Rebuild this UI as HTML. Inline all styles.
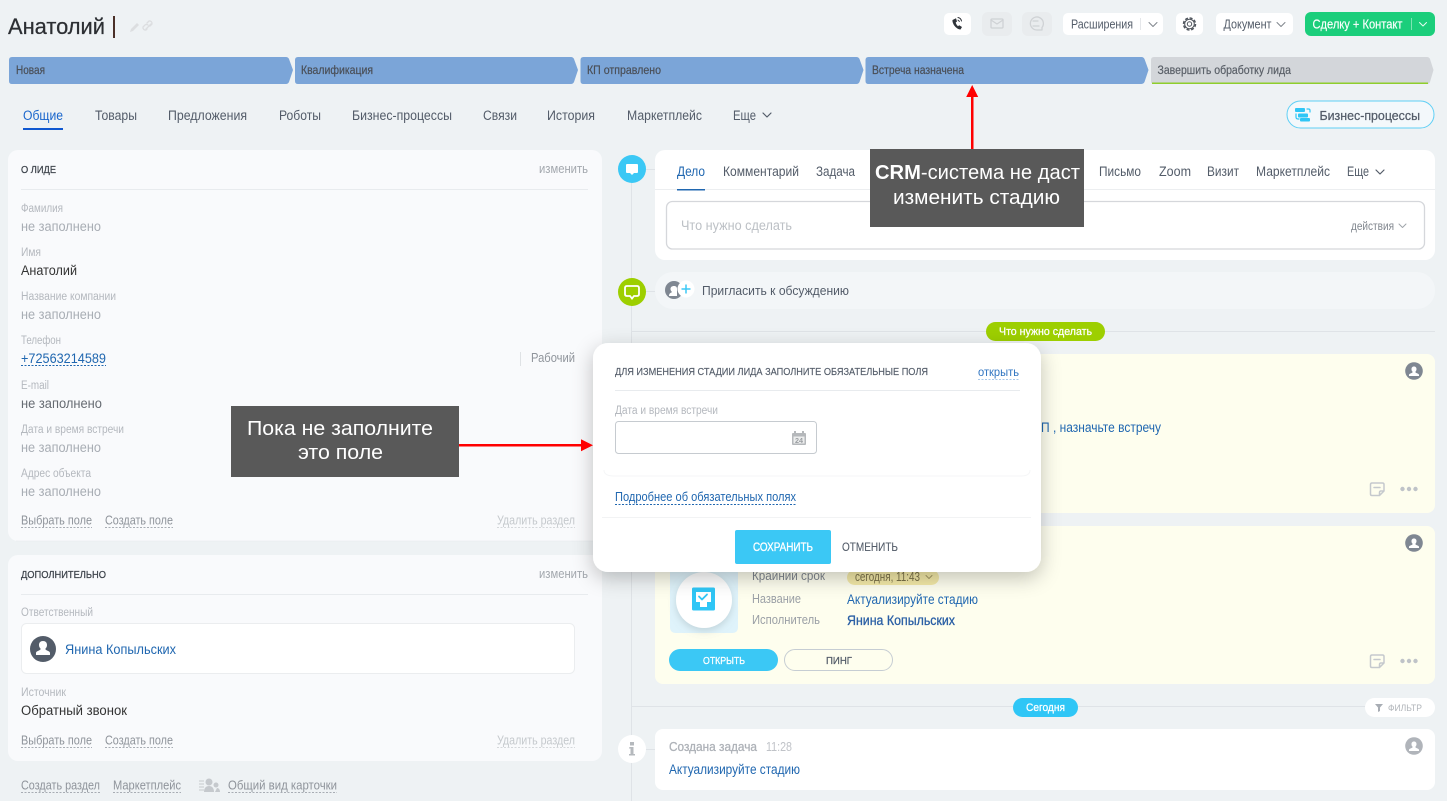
<!DOCTYPE html>
<html lang="ru"><head><meta charset="utf-8"><title>Анатолий</title>
<style>
html,body{margin:0;padding:0;width:1447px;height:801px;overflow:hidden;background:#eef2f4}
svg{display:block;position:absolute;left:0;top:0}
text{font-family:"Liberation Sans","DejaVu Sans",sans-serif;font-size:13.5px;fill:#535c69;white-space:pre}
.l{font-size:11.5px;fill:#b4b8be}
.e{fill:#a8adb4}
.v{fill:#333}
.b{fill:#2067b0}
.g{font-size:12.5px;fill:#8f949b}
.s{font-size:11.5px;fill:#4a4f57;stroke:#4a4f57;stroke-width:.2}
.h{font-size:10.5px;fill:#3d434b;stroke:#3d434b;stroke-width:.25}
.t{font-size:13.5px;fill:#535c69}
.w{fill:#fff;stroke:#fff;stroke-width:.25;font-size:11px}
.a{fill:#fff;font-size:20px}
.c{fill:none;stroke-linecap:round;stroke-linejoin:round}
</style></head><body>
<svg width="1447" height="801" viewBox="0 0 1447 801" xmlns="http://www.w3.org/2000/svg">
<defs>
<filter id="sh" x="-15%" y="-20%" width="130%" height="145%"><feDropShadow dx="0" dy="6" stdDeviation="10" flood-color="#000" flood-opacity=".24"/></filter>
<filter id="cs" x="-30%" y="-30%" width="160%" height="160%"><feDropShadow dx="0" dy="3" stdDeviation="4" flood-color="#7a8a90" flood-opacity=".3"/></filter>
</defs>
<rect width="1447" height="801" fill="#eef2f4"/>

<!-- header -->
<text x="8" y="34" style="font-size:22.5px;fill:#2c2f33;stroke:#2c2f33;stroke-width:.25" textLength="97" lengthAdjust="spacingAndGlyphs">Анатолий</text>
<rect x="113" y="16" width="2" height="22" fill="#4a3028"/>
<path d="M130 32l1-3 6-6 2 2-6 6z" fill="#dcdee0"/>
<path d="M147 29l-1 1a2.500 2.500 0 0 1-3-3l2-2a2.500 2.500 0 0 1 3 0M150 26l2-2a2.500 2.500 0 0 0-3-3l-2 2M146 29l5-5" class="c" stroke="#dcdee0" stroke-width="1.300"/>

<!-- top buttons -->
<rect x="944" y="13" width="27" height="22" rx="5" fill="#fff"/>
<path d="M952.500 20c-.5 3 3 9 8 9.500l1.500-2.500-2.800-1.800-1.200 1c-1-.6-2-2.500-2.300-3.700l1.300-1-1-3.200z" fill="#2f343a"/>
<path d="M958 17.500a4.500 4.500 0 0 1 3.500 3.500M958 20.200a2 2 0 0 1 1.300 1.300" class="c" stroke="#2f343a" stroke-width="1"/>
<rect x="982" y="12" width="30" height="24" rx="6" fill="#e9ecee"/>
<rect x="991" y="19" width="12" height="9" rx="1" fill="none" stroke="#cfd2d5" stroke-width="1.300"/>
<path d="M991 20l6 4 6-4" class="c" stroke="#cfd2d5" stroke-width="1.200"/>
<rect x="1022" y="12" width="30" height="24" rx="6" fill="#e9ecee"/>
<path d="M1042 30h-5a6.500 6.500 0 1 1 5-2.500z" class="c" stroke="#cfd2d5" stroke-width="1.300"/>
<path d="M1033 21h5M1033 26h6" class="c" stroke="#cfd2d5" stroke-width="1.200"/>
<rect x="1063" y="13" width="100" height="22" rx="5" fill="#fff"/>
<text x="1071" y="28.500" style="font-size:12.500px" textLength="62" lengthAdjust="spacingAndGlyphs">Расширения</text>
<rect x="1140" y="18" width="1" height="12" fill="#e5e7ea"/>
<path d="M1149 22.500l4 4 4-4" class="c" stroke="#7f858c" stroke-width="1"/>
<rect x="1176" y="13" width="27" height="22" rx="5" fill="#fff"/>
<circle cx="1189.500" cy="24" r="6" fill="none" stroke="#4f555d" stroke-width="1.500" stroke-dasharray="3 1.700"/>
<circle cx="1189.500" cy="24" r="4.800" fill="none" stroke="#4f555d" stroke-width="1"/>
<circle cx="1189.500" cy="24" r="2.200" fill="none" stroke="#4f555d" stroke-width="1"/>
<rect x="1216" y="13" width="77" height="22" rx="5" fill="#fff"/>
<text x="1223.500" y="28.500" style="font-size:12.500px" textLength="48" lengthAdjust="spacingAndGlyphs">Документ</text>
<path d="M1277 22.500l4 4 4-4" class="c" stroke="#7f858c" stroke-width="1"/>
<rect x="1305" y="12" width="130" height="24" rx="6" fill="#1bce7b"/>
<text x="1312.500" y="28.500" style="font-size:12.500px;fill:#fff;stroke:#fff;stroke-width:.15" textLength="90" lengthAdjust="spacingAndGlyphs">Сделку + Контакт</text>
<rect x="1411" y="18" width="1" height="12" fill="#7fe4b3"/>
<path d="M1419.500 22.500l3.500 3.500 3.500-3.500" class="c" stroke="#e6fbf0" stroke-width="1"/>

<!-- stages -->
<path d="M12 57H286q2 0 3 2l4 11-4 12q-1 2-3 2H12q-3 0-3-3V60q0-3 3-3z" fill="#7ba5d8"/>
<path d="M298 57H571q2 0 3 2l4 11-4 12q-1 2-3 2H298q-3 0-3-3V60q0-3 3-3z" fill="#7ba5d8"/>
<path d="M583.500 57H856.500q2 0 3 2l4 11-4 12q-1 2-3 2H583.500q-3 0-3-3V60q0-3 3-3z" fill="#7ba5d8"/>
<path d="M868.500 57H1141.500q2 0 3 2l4 11-4 12q-1 2-3 2H868.500q-3 0-3-3V60q0-3 3-3z" fill="#7ba5d8"/>
<path d="M1154 57H1427q2 0 3 2l3.500 11-3.500 12q-1 2-3 2H1154q-3 0-3-3V60q0-3 3-3z" fill="#d3d6da"/>
<rect x="1152" y="82.500" width="276" height="1.500" fill="#8fce2c"/>
<text class="s" x="16" y="74" textLength="29" lengthAdjust="spacingAndGlyphs">Новая</text>
<text class="s" x="301" y="74" textLength="72" lengthAdjust="spacingAndGlyphs">Квалификация</text>
<text class="s" x="587" y="74" textLength="74" lengthAdjust="spacingAndGlyphs">КП отправлено</text>
<text class="s" x="872" y="74" textLength="92" lengthAdjust="spacingAndGlyphs">Встреча назначена</text>
<text class="s" x="1157.500" y="74" textLength="133.500" lengthAdjust="spacingAndGlyphs" style="fill:#5a6068;stroke:#5a6068">Завершить обработку лида</text>

<!-- tabs -->
<text class="t" x="23" y="120" textLength="40" lengthAdjust="spacingAndGlyphs" style="fill:#1a66cc">Общие</text>
<rect x="23" y="128" width="40" height="2" fill="#1058d0"/>
<text class="t" x="95" y="120" textLength="42" lengthAdjust="spacingAndGlyphs">Товары</text>
<text class="t" x="168" y="120" textLength="79" lengthAdjust="spacingAndGlyphs">Предложения</text>
<text class="t" x="279" y="120" textLength="42" lengthAdjust="spacingAndGlyphs">Роботы</text>
<text class="t" x="352" y="120" textLength="100" lengthAdjust="spacingAndGlyphs">Бизнес-процессы</text>
<text class="t" x="483" y="120" textLength="34" lengthAdjust="spacingAndGlyphs">Связи</text>
<text class="t" x="547" y="120" textLength="48" lengthAdjust="spacingAndGlyphs">История</text>
<text class="t" x="627" y="120" textLength="75" lengthAdjust="spacingAndGlyphs">Маркетплейс</text>
<text class="t" x="733" y="120" textLength="23" lengthAdjust="spacingAndGlyphs">Еще</text>
<path d="M763 113l4 4 4-4" class="c" stroke="#535c69" stroke-width="1.200"/>
<rect x="1287" y="101" width="147" height="27" rx="13.500" fill="#f3f8fb" stroke="#5fcff5"/>
<rect x="1295" y="108" width="10" height="4" rx="1" fill="#2fc6f6"/>
<rect x="1298" y="113.500" width="10" height="4" rx="1" fill="#2fc6f6"/>
<rect x="1300" y="118" width="10" height="3.500" rx="1" fill="#2fc6f6"/>
<path d="M1307 109h1.500q1.500 0 1.500 1.500V112M1296 114v3q0 2 2 2h1" class="c" stroke="#2fc6f6" stroke-width="1.200"/>
<text x="1319.500" y="120" textLength="100.500" lengthAdjust="spacingAndGlyphs" style="font-size:13px;fill:#535c69;stroke:#535c69;stroke-width:.25">Бизнес-процессы</text>

<!-- left panel 1 -->
<rect x="8" y="150" width="594" height="391" rx="10" fill="#f9fafc"/>
<rect x="16" y="540.500" width="578" height="1" fill="#e6e9ec" opacity=".6"/>
<text class="h" x="21" y="173" textLength="35" lengthAdjust="spacingAndGlyphs">О ЛИДЕ</text>
<text class="g" x="539" y="173" textLength="49" lengthAdjust="spacingAndGlyphs" style="fill:#a3a8ae">изменить</text>
<rect x="21" y="189" width="567" height="1" fill="#e8ebee"/>
<text class="l" x="21" y="212" textLength="42" lengthAdjust="spacingAndGlyphs">Фамилия</text>
<text class="e" x="21" y="231" textLength="80" lengthAdjust="spacingAndGlyphs">не заполнено</text>
<text class="l" x="21" y="256" textLength="20" lengthAdjust="spacingAndGlyphs">Имя</text>
<text class="v" x="21" y="275" textLength="56" lengthAdjust="spacingAndGlyphs">Анатолий</text>
<text class="l" x="21" y="300" textLength="95" lengthAdjust="spacingAndGlyphs">Название компании</text>
<text class="e" x="21" y="319" textLength="80" lengthAdjust="spacingAndGlyphs">не заполнено</text>
<text class="l" x="21" y="344" textLength="40" lengthAdjust="spacingAndGlyphs">Телефон</text>
<text class="b" x="21" y="363" textLength="85" lengthAdjust="spacingAndGlyphs">+72563214589</text>
<line x1="21" y1="365.500" x2="106" y2="365.500" stroke="#2067b0" stroke-dasharray="2 1.500"/>
<rect x="520" y="352" width="1" height="14" fill="#dfe2e5"/>
<text class="g" x="531" y="362" textLength="44" lengthAdjust="spacingAndGlyphs">Рабочий</text>
<text class="l" x="21" y="389" textLength="28" lengthAdjust="spacingAndGlyphs">E-mail</text>
<text class="v" x="21" y="408" textLength="81" lengthAdjust="spacingAndGlyphs" style="fill:#666b72">не заполнено</text>
<text class="l" x="21" y="433" textLength="103" lengthAdjust="spacingAndGlyphs">Дата и время встречи</text>
<text class="e" x="21" y="452" textLength="80" lengthAdjust="spacingAndGlyphs">не заполнено</text>
<text class="l" x="21" y="477" textLength="70" lengthAdjust="spacingAndGlyphs">Адрес объекта</text>
<text class="e" x="21" y="496" textLength="80" lengthAdjust="spacingAndGlyphs">не заполнено</text>
<text class="g" x="21" y="524.500" textLength="71" lengthAdjust="spacingAndGlyphs">Выбрать поле</text>
<line x1="21" y1="527.500" x2="92" y2="527.500" stroke="#a8adb4" stroke-dasharray="2 1.500"/>
<text class="g" x="105" y="524.500" textLength="68" lengthAdjust="spacingAndGlyphs">Создать поле</text>
<line x1="105" y1="527.500" x2="173" y2="527.500" stroke="#a8adb4" stroke-dasharray="2 1.500"/>
<text class="g" x="497" y="524.500" textLength="78" lengthAdjust="spacingAndGlyphs" style="fill:#c5c9cd">Удалить раздел</text>
<line x1="497" y1="527.500" x2="575" y2="527.500" stroke="#d5d8db" stroke-dasharray="2 1.500"/>

<!-- left panel 2 -->
<rect x="8" y="555" width="594" height="206" rx="10" fill="#f9fafc"/>
<text class="h" x="21" y="578" textLength="85" lengthAdjust="spacingAndGlyphs">ДОПОЛНИТЕЛЬНО</text>
<text class="g" x="539" y="578" textLength="49" lengthAdjust="spacingAndGlyphs" style="fill:#a3a8ae">изменить</text>
<rect x="21" y="594" width="567" height="1" fill="#e8ebee"/>
<text class="l" x="21" y="616" textLength="72" lengthAdjust="spacingAndGlyphs">Ответственный</text>
<rect x="21.500" y="623.500" width="553" height="50" rx="5" fill="#fff" stroke="#ebedef"/>
<circle cx="43" cy="649" r="13" fill="#535c69"/>
<path d="M36 655v-2c0-2 3-2 4.500-3.500v-1c-1-1-1.500-2-1.500-3.500 0-2.500 1.500-4 4-4s4 1.500 4 4c0 1.500-.5 2.500-1.500 3.500v1c1.500 1.500 4.500 1.500 4.500 3.500v2z" fill="#fff"/>
<text class="b" x="65" y="654" textLength="111" lengthAdjust="spacingAndGlyphs">Янина Копыльских</text>
<text class="l" x="21" y="696" textLength="45" lengthAdjust="spacingAndGlyphs">Источник</text>
<text class="v" x="21" y="715" textLength="106" lengthAdjust="spacingAndGlyphs">Обратный звонок</text>
<text class="g" x="21" y="744.500" textLength="71" lengthAdjust="spacingAndGlyphs">Выбрать поле</text>
<line x1="21" y1="747.500" x2="92" y2="747.500" stroke="#a8adb4" stroke-dasharray="2 1.500"/>
<text class="g" x="105" y="744.500" textLength="68" lengthAdjust="spacingAndGlyphs">Создать поле</text>
<line x1="105" y1="747.500" x2="173" y2="747.500" stroke="#a8adb4" stroke-dasharray="2 1.500"/>
<text class="g" x="497" y="744.500" textLength="78" lengthAdjust="spacingAndGlyphs" style="fill:#c5c9cd">Удалить раздел</text>
<line x1="497" y1="747.500" x2="575" y2="747.500" stroke="#d5d8db" stroke-dasharray="2 1.500"/>

<!-- bottom links -->
<text class="g" x="21" y="789.500" textLength="79" lengthAdjust="spacingAndGlyphs">Создать раздел</text>
<line x1="21" y1="792.500" x2="100" y2="792.500" stroke="#a8adb4" stroke-dasharray="2 1.500"/>
<text class="g" x="113" y="789.500" textLength="68" lengthAdjust="spacingAndGlyphs">Маркетплейс</text>
<line x1="113" y1="792.500" x2="181" y2="792.500" stroke="#a8adb4" stroke-dasharray="2 1.500"/>
<path d="M199 781h5M199 784h5M199 787h5M199 790h5" stroke="#c5c9cd"/>
<circle cx="209" cy="782" r="3.500" fill="#c5c9cd"/><path d="M204 792c0-4 2-6 5-6s5 2 5 6z" fill="#c5c9cd"/>
<circle cx="216" cy="785" r="2.500" fill="#c5c9cd"/><path d="M215 792h5c0-2-1-4-3-4z" fill="#c5c9cd"/>
<text class="g" x="228" y="789.500" textLength="109" lengthAdjust="spacingAndGlyphs">Общий вид карточки</text>
<line x1="228" y1="792.500" x2="337" y2="792.500" stroke="#a8adb4" stroke-dasharray="2 1.500"/>

<!-- timeline -->
<rect x="631" y="170" width="1" height="631" fill="#dfe3e7"/>
<rect x="646" y="169" width="9" height="1" fill="#dfe3e7"/>
<rect x="646" y="291" width="9" height="1" fill="#dfe3e7"/>
<rect x="646" y="749" width="9" height="1" fill="#dfe3e7"/>
<circle cx="632" cy="169" r="14" fill="#3bc8f5"/>
<path d="M627 164h10q1 0 1 1v7q0 1-1 1h-3l-2 2-2-2h-3q-1 0-1-1v-7q0-1 1-1z" fill="#fff"/>
<circle cx="632" cy="292" r="14" fill="#9dcf00"/>
<path d="M627 286h10q2 0 2 2v6q0 2-2 2h-3l-2 2.500-2-2.500h-3q-2 0-2-2v-6q0-2 2-2z" fill="none" stroke="#fff" stroke-width="1.800"/>
<circle cx="632" cy="749" r="14" fill="#fff"/>
<rect x="630" y="742" width="4" height="3.500" fill="#b5b9bd"/>
<path d="M629.500 747h4v7h1.500v1.500h-6V754h1.500v-5.500h-1.500z" fill="#b5b9bd"/>

<!-- composer -->
<rect x="655" y="150" width="780" height="110" rx="10" fill="#fff"/>
<rect x="655" y="189" width="780" height="1" fill="#eceef0"/>
<rect x="677" y="189" width="28" height="1.500" fill="#2067b0"/>
<text x="677" y="176" textLength="28" lengthAdjust="spacingAndGlyphs" style="fill:#2067b0">Дело</text>
<text x="723" y="176" textLength="76" lengthAdjust="spacingAndGlyphs">Комментарий</text>
<text x="816" y="176" textLength="39" lengthAdjust="spacingAndGlyphs">Задача</text>
<text x="1099" y="176" textLength="42" lengthAdjust="spacingAndGlyphs">Письмо</text>
<text x="1159" y="176" textLength="32" lengthAdjust="spacingAndGlyphs">Zoom</text>
<text x="1207" y="176" textLength="32" lengthAdjust="spacingAndGlyphs">Визит</text>
<text x="1256" y="176" textLength="74" lengthAdjust="spacingAndGlyphs">Маркетплейс</text>
<text x="1347" y="176" textLength="22" lengthAdjust="spacingAndGlyphs">Еще</text>
<path d="M1376 170l4 4 4-4" class="c" stroke="#535c69" stroke-width="1.200"/>
<rect x="666.500" y="201.500" width="758" height="47.500" rx="6" fill="#fff" stroke="#d5d7db" stroke-width="1.300"/>
<text x="681" y="230" textLength="111" lengthAdjust="spacingAndGlyphs" style="fill:#bcc0c5">Что нужно сделать</text>
<text x="1351" y="230" textLength="43" lengthAdjust="spacingAndGlyphs" style="font-size:11.500px;fill:#80868e">действия</text>
<path d="M1399 224l3.500 3.500 3.500-3.500" class="c" stroke="#a0a5ab" stroke-width="1"/>

<!-- invite -->
<rect x="655" y="272" width="780" height="37" rx="18" fill="#f3f6f8"/>
<circle cx="674" cy="290" r="9" fill="#7f8792"/>
<path d="M669 296c0-3 2-3 3-4-1-1-1.500-2-1.500-3 0-2 1.500-3 3.500-3s3 1 3 3v7z" fill="#fff"/>
<circle cx="686" cy="289" r="8.500" fill="#fff"/>
<path d="M686 284.500v9M681.500 289h9" stroke="#3bc8f5" stroke-width="1.500"/>
<text x="702" y="295" textLength="147" lengthAdjust="spacingAndGlyphs" style="font-size:13px">Пригласить к обсуждению</text>

<!-- divider 1 -->
<rect x="632" y="331" width="803" height="1" fill="#dfe3e7"/>
<rect x="986" y="322" width="119" height="19" rx="9.500" fill="#9dcf00"/>
<text class="w" x="999" y="335" textLength="93" lengthAdjust="spacingAndGlyphs">Что нужно сделать</text>

<!-- yellow cards -->
<rect x="655" y="354" width="780" height="159" rx="8" fill="#fefeee"/>
<text class="b" x="1041" y="432" textLength="120" lengthAdjust="spacingAndGlyphs">П , назначьте встречу</text>
<circle cx="1414" cy="371" r="8.800" fill="#7f8792"/>
<path d="M1409 376v-1c0-1.500 2-1.500 3.500-2.500v-1c-1-.7-1-1.500-1-2.500 0-1.500 1-2.500 2.500-2.500s2.500 1 2.500 2.500c0 1-.2 1.800-1 2.500v1c1.500 1 3.500 1 3.500 2.500v1z" fill="#fff"/>
<path d="M1372 483h10.500q1.500 0 1.500 1.500V491l-4.500 4.500H1372q-1.500 0-1.500-1.500V484.500q0-1.500 1.500-1.500zM1374 487.500h6M1384 491h-3q-1.500 0-1.500 1.500v3" class="c" stroke="#c5c9cd" stroke-width="1.500"/>
<circle cx="1402.500" cy="489" r="2.200" fill="#bfc3c8"/><circle cx="1409" cy="489" r="2.200" fill="#bfc3c8"/><circle cx="1415.500" cy="489" r="2.200" fill="#bfc3c8"/>

<rect x="655" y="526" width="780" height="158" rx="8" fill="#fefeee"/>
<circle cx="1414" cy="543" r="8.800" fill="#7f8792"/>
<path d="M1409 548v-1c0-1.500 2-1.500 3.500-2.500v-1c-1-.7-1-1.500-1-2.500 0-1.500 1-2.500 2.500-2.500s2.500 1 2.500 2.500c0 1-.2 1.800-1 2.500v1c1.500 1 3.500 1 3.500 2.500v1z" fill="#fff"/>
<path d="M1372 655h10.500q1.500 0 1.500 1.500V663l-4.500 4.500H1372q-1.500 0-1.500-1.500V656.500q0-1.500 1.500-1.500zM1374 659.500h6M1384 663h-3q-1.500 0-1.500 1.500v3" class="c" stroke="#c5c9cd" stroke-width="1.500"/>
<circle cx="1402.500" cy="661" r="2.200" fill="#bfc3c8"/><circle cx="1409" cy="661" r="2.200" fill="#bfc3c8"/><circle cx="1415.500" cy="661" r="2.200" fill="#bfc3c8"/>
<path d="M670 560h68v67q0 6-6 6h-56q-6 0-6-6z" fill="#dff3fb"/>
<circle cx="704" cy="600" r="28" fill="#fff" filter="url(#cs)"/>
<rect x="692" y="587.500" width="23" height="23" rx="1.500" fill="#2fc6f6"/>
<path d="M696 592h15v10h-4v5h-7v-5h-4z" fill="#fff"/>
<path d="M699 596.500l3 3 5-5" class="c" stroke="#2fc6f6" stroke-width="1.800"/>
<text x="752" y="580" textLength="73" lengthAdjust="spacingAndGlyphs" style="font-size:12.500px;fill:#80868e">Крайний срок</text>
<rect x="847" y="570" width="92" height="15" rx="7.500" fill="#f3e9a8"/>
<text x="855" y="581" textLength="65" lengthAdjust="spacingAndGlyphs" style="font-size:12.500px;fill:#7a7148">сегодня, 11:43</text>
<path d="M926 575.500l3 3 3-3" class="c" stroke="#a59b68" stroke-width="1"/>
<text x="752" y="603" textLength="49" lengthAdjust="spacingAndGlyphs" style="font-size:12.500px;fill:#9ba0a6">Название</text>
<text class="b" x="847" y="604" textLength="131" lengthAdjust="spacingAndGlyphs">Актуализируйте стадию</text>
<text x="752" y="624" textLength="68" lengthAdjust="spacingAndGlyphs" style="font-size:12.500px;fill:#9ba0a6">Исполнитель</text>
<text class="b" x="847" y="625" textLength="108" lengthAdjust="spacingAndGlyphs" style="fill:#2a5fa5;stroke:#2a5fa5;stroke-width:.3">Янина Копыльских</text>
<rect x="669" y="649" width="109" height="22" rx="11" fill="#3bc8f5"/>
<text class="w" x="703" y="664" textLength="42" lengthAdjust="spacingAndGlyphs" style="font-size:10.500px">ОТКРЫТЬ</text>
<rect x="784.500" y="649.500" width="108" height="21" rx="10.500" fill="none" stroke="#c6cdd3"/>
<text x="826" y="664" textLength="26" lengthAdjust="spacingAndGlyphs" style="font-size:10.500px;fill:#535c69;stroke:#535c69;stroke-width:.25">ПИНГ</text>

<!-- divider 2 -->
<rect x="632" y="706" width="733" height="1" fill="#dfe3e7"/>
<rect x="1013" y="698" width="65" height="19" rx="9.500" fill="#2fc6f6"/>
<text class="w" x="1026" y="711" textLength="39" lengthAdjust="spacingAndGlyphs">Сегодня</text>
<rect x="1365" y="698" width="70" height="19" rx="9.500" fill="#fff"/>
<path d="M1375 704h8l-3 3.500v3.500l-2 1v-4.500z" fill="#a8adb4"/>
<text x="1388" y="711" textLength="34" lengthAdjust="spacingAndGlyphs" style="font-size:9.500px;fill:#b0b4b9">ФИЛЬТР</text>

<!-- history item -->
<rect x="655" y="729" width="780" height="61" rx="8" fill="#fff"/>
<text x="669" y="751" textLength="88" lengthAdjust="spacingAndGlyphs" style="font-size:12.500px;fill:#aeb2b8;stroke:#aeb2b8;stroke-width:.3">Создана задача</text>
<text x="766" y="751" textLength="26" lengthAdjust="spacingAndGlyphs" style="font-size:12.500px;fill:#c0c3c8">11:28</text>
<text class="b" x="669" y="774" textLength="131" lengthAdjust="spacingAndGlyphs">Актуализируйте стадию</text>
<circle cx="1414" cy="746" r="8.800" fill="#b0b4ba"/>
<path d="M1409 751v-1c0-1.500 2-1.500 3.500-2.500v-1c-1-.7-1-1.500-1-2.500 0-1.500 1-2.500 2.500-2.500s2.500 1 2.500 2.500c0 1-.2 1.800-1 2.500v1c1.500 1 3.500 1 3.500 2.500v1z" fill="#fff"/>

<!-- modal -->
<rect x="593" y="343" width="448" height="229" rx="15" fill="#fff" filter="url(#sh)"/>
<text class="h" x="615" y="375" textLength="313" lengthAdjust="spacingAndGlyphs" style="fill:#535c69;stroke:#535c69;stroke-width:.15">ДЛЯ ИЗМЕНЕНИЯ СТАДИИ ЛИДА ЗАПОЛНИТЕ ОБЯЗАТЕЛЬНЫЕ ПОЛЯ</text>
<text class="b" x="978" y="376" textLength="41" lengthAdjust="spacingAndGlyphs" style="font-size:12px;fill:#2f74c0">открыть</text>
<line x1="978" y1="379.500" x2="1020" y2="379.500" stroke="#a9c8ea" stroke-dasharray="2 1.500"/>
<rect x="615" y="390" width="405" height="1" fill="#e8ebee"/>
<text class="l" x="615" y="414" textLength="103" lengthAdjust="spacingAndGlyphs">Дата и время встречи</text>
<rect x="615.500" y="421.500" width="201" height="32" rx="3" fill="#fff" stroke="#c6cbd0"/>
<rect x="792" y="433" width="14" height="12" rx="1" fill="#b5b8bb"/>
<rect x="794" y="431" width="2" height="3" fill="#b5b8bb"/><rect x="802" y="431" width="2" height="3" fill="#b5b8bb"/>
<rect x="793.500" y="436.500" width="11" height="7" fill="#eceded"/>
<text x="795" y="443" textLength="8" lengthAdjust="spacingAndGlyphs" style="font-size:7px;font-weight:bold;fill:#9a9ea2">24</text>
<path d="M604 470q0 6 10 6H1021q9 0 9-6" fill="none" stroke="#f5f6f7"/>
<text class="b" x="615" y="501" textLength="181" lengthAdjust="spacingAndGlyphs" style="font-size:12.500px">Подробнее об обязательных полях</text>
<line x1="615" y1="504.500" x2="796" y2="504.500" stroke="#2067b0" stroke-dasharray="2 1.500"/>
<rect x="602" y="517" width="429" height="1" fill="#f2f3f4"/>
<rect x="735" y="530" width="96" height="34" rx="2" fill="#3bc8f5"/>
<text x="753" y="551" textLength="60" lengthAdjust="spacingAndGlyphs" style="font-size:11.500px;fill:#fff;stroke:#fff;stroke-width:.3">СОХРАНИТЬ</text>
<text x="842" y="551" textLength="56" lengthAdjust="spacingAndGlyphs" style="font-size:11.500px;fill:#535c69;stroke:#535c69;stroke-width:.1">ОТМЕНИТЬ</text>

<!-- annotations -->
<rect x="870" y="149" width="214" height="78" fill="#595959"/>
<text class="a" x="875" y="179" textLength="205" lengthAdjust="spacingAndGlyphs"><tspan style="font-weight:bold;fill:#fff">CRM</tspan>-система не даст</text>
<text class="a" x="893" y="204" textLength="167" lengthAdjust="spacingAndGlyphs">изменить стадию</text>
<rect x="971" y="95" width="2.500" height="54" fill="#f00"/>
<path d="M972.200 85l6 12h-12z" fill="#f00"/>

<rect x="231" y="406" width="228" height="71" fill="#595959"/>
<text class="a" x="247" y="435" textLength="186" lengthAdjust="spacingAndGlyphs">Пока не заполните</text>
<text class="a" x="298" y="459" textLength="85" lengthAdjust="spacingAndGlyphs">это поле</text>
<rect x="459" y="444" width="124" height="2.500" fill="#f00"/>
<path d="M593 445.200l-12 6v-12z" fill="#f00"/>
</svg>
</body></html>
